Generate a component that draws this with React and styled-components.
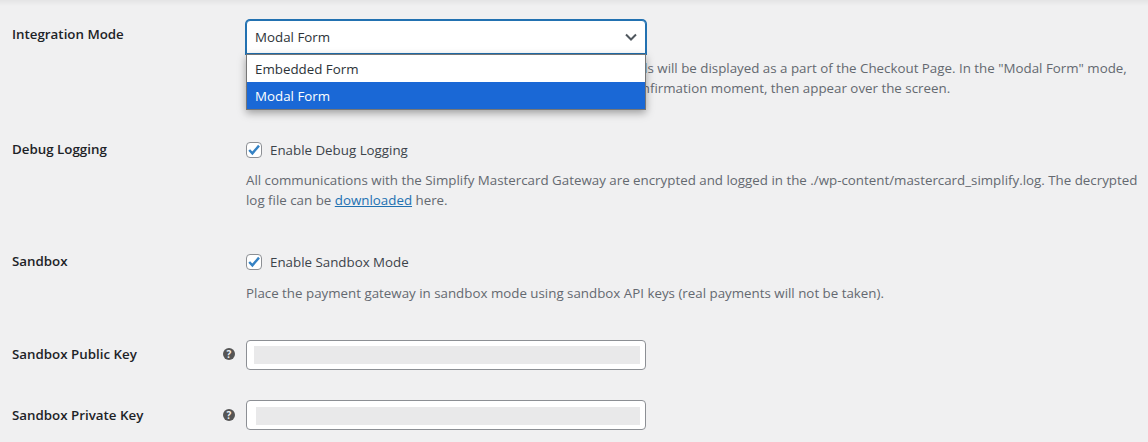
import React from 'react';
import styled, { createGlobalStyle } from 'styled-components';

const Global = createGlobalStyle`
  html, body { margin: 0; padding: 0; background: #f0f0f1; }
  body {
    width: 1148px;
    height: 442px;
    overflow: hidden;
    font-family: "Open Sans", "Noto Sans", sans-serif;
    font-size: 13.33px;
    color: #3c434a;
  }
  * { box-sizing: border-box; }
`;

const Page = styled.div`
  height: 442px;
  overflow: hidden;
  padding: 20px 0 0 12px;
  background: linear-gradient(#e4e4e5, #f0f0f1 6px);
`;
const Row = styled.div`
  display: grid;
  grid-template-columns: 234px 1fr;
  min-height: ${props => props.$height}px;
`;
const Label = styled.div`
  display: flex;
  justify-content: space-between;
  align-items: flex-start;
  width: 223px;
  padding-top: ${props => props.$top || 6}px;
  font-weight: 600;
  font-size: 13.33px;
  line-height: 16px;
  color: #1d2327;
`;
const Help = styled.span`
  width: 12px;
  height: 12px;
  margin-top: 2px;
  border-radius: 50%;
  background: #555;
  color: #f0f0f1;
  font-size: 10px;
  font-weight: 700;
  line-height: 12px;
  text-align: center;
`;
const Field = styled.div`
  position: relative;
  width: 902px;
`;
const Select = styled.div`
  width: 400px;
  height: 34px;
  display: flex;
  align-items: center;
  justify-content: space-between;
  padding: 0 7px 0 8px;
  background: #fff;
  border: 1px solid #2271b1;
  border-radius: 4px 4px 0 0;
  box-shadow: 0 0 0 1px #2271b1;
  color: #2c3338;
`;
const Menu = styled.div`
  position: absolute;
  top: 34px;
  left: 0;
  width: 400px;
  background: #fff;
  border: 1px solid #767676;
  box-shadow: 0 3px 8px rgba(0, 0, 0, 0.35);
`;
const Option = styled.div`
  height: 27px;
  padding: 1px 8px 0;
  line-height: 27px;
  background: ${props => (props.$active ? '#1a68d6' : '#fff')};
  color: ${props => (props.$active ? '#fff' : '#2c3338')};
`;
const Description = styled.p`
  margin: ${props => props.$top}px 0 0;
  line-height: 20px;
  color: #646970;
  white-space: nowrap;
`;
const Check = styled.label`
  display: flex;
  align-items: center;
  gap: 8px;
  height: 20px;
  color: #3c434a;
`;
const Box = styled.span`
  width: 16px;
  height: 16px;
  display: flex;
  align-items: center;
  justify-content: center;
  background: #fff;
  border: 1px solid #8c8f94;
  border-radius: 4px;
`;
const Link = styled.a`
  color: #2271b1;
  text-decoration: underline;
`;
const KeyInput = styled.div`
  width: 400px;
  height: 30px;
  padding: ${props => (props.$shifted ? '6px 5px 4px 9px' : '5px 5px 5px 7px')};
  background: #fff;
  border: 1px solid #8c8f94;
  border-radius: 4px;
`;
const Blur = styled.div`
  height: 18px;
  background: #e9e9ea;
`;

const Chevron = () => (
  <svg width="14" height="14" viewBox="0 0 14 14" fill="none" stroke="#50575e" strokeWidth="2">
    <path d="M2 4.5l5 5 5-5" />
  </svg>
);

const Tick = () => (
  <svg width="14" height="14" viewBox="0 0 14 14" fill="none" stroke="#3582c4" strokeWidth="2.4">
    <path d="M2.2 7l3.2 3.4L12 2.6" />
  </svg>
);

export default function App() {
  return (
    <Page>
      <Global />
      <Row $height={120}>
        <Label>Integration Mode</Label>
        <Field>
          <Select>Modal Form<Chevron /></Select>
          <Menu>
            <Option>Embedded Form</Option>
            <Option $active>Modal Form</Option>
          </Menu>
          <Description $top={4}>
            In the "Embedded Form" mode, the Simplify payments form fields will be displayed as a part of the Checkout Page. In the "Modal Form" mode,<br />
            the Simplify payments fields will be hidden until the payment confirmation moment, then appear over the screen.
          </Description>
        </Field>
      </Row>
      <Row $height={112}>
        <Label $top={1}>Debug Logging</Label>
        <Field>
          <Check><Box><Tick /></Box>Enable Debug Logging</Check>
          <Description $top={10}>
            All communications with the Simplify Mastercard Gateway are encrypted and logged in the ./wp-content/mastercard_simplify.log. The decrypted<br />
            log file can be <Link>downloaded</Link> here.
          </Description>
        </Field>
      </Row>
      <Row $height={88}>
        <Label $top={1}>Sandbox</Label>
        <Field>
          <Check><Box><Tick /></Box>Enable Sandbox Mode</Check>
          <Description $top={11}>
            Place the payment gateway in sandbox mode using sandbox API keys (real payments will not be taken).
          </Description>
        </Field>
      </Row>
      <Row $height={60}>
        <Label><span>Sandbox Public Key</span><Help>?</Help></Label>
        <Field><KeyInput><Blur /></KeyInput></Field>
      </Row>
      <Row $height={42}>
        <Label $top={7}><span>Sandbox Private Key</span><Help>?</Help></Label>
        <Field><KeyInput $shifted><Blur /></KeyInput></Field>
      </Row>
    </Page>
  );
}
